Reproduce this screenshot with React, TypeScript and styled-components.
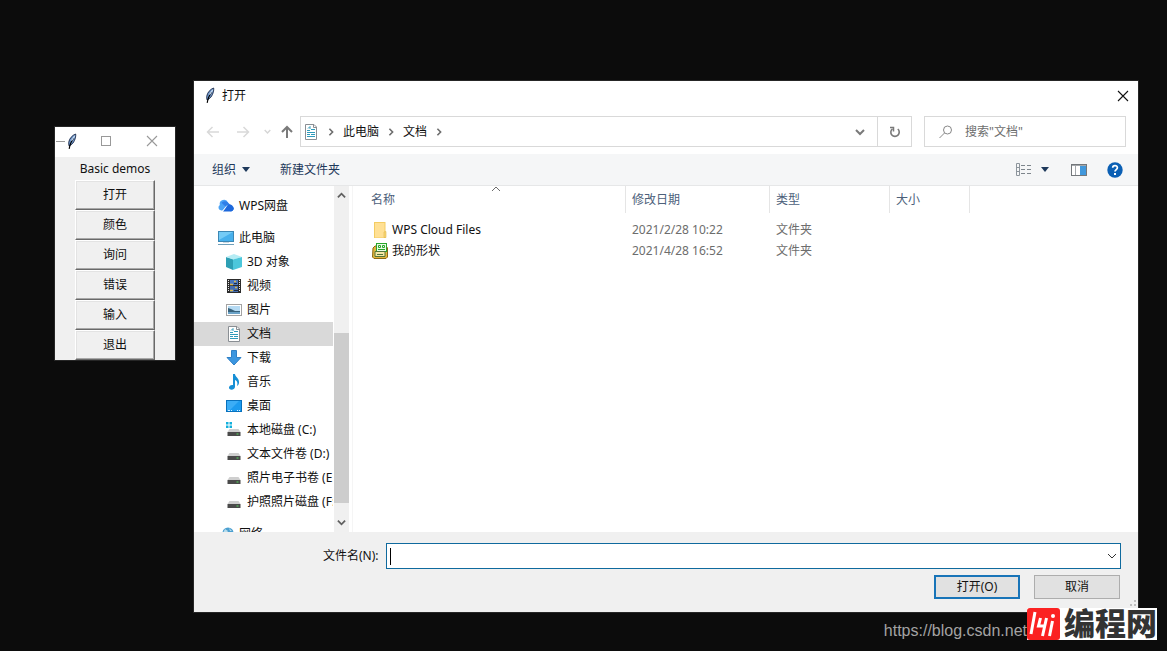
import React from 'react';
import styled, { createGlobalStyle } from 'styled-components';

const GlobalStyle = createGlobalStyle`
  * { box-sizing: border-box; }
  body {
    margin: 0;
    background: #0c0c0c;
    font: 12px/16px "Noto Sans", "Noto Sans CJK SC", sans-serif;
    color: #111;
  }
  button, input { font: inherit; color: inherit; }
  button { padding: 0; margin: 0; border: 0; background: none; }
  svg { display: block; flex: none; }
`;

const Desktop = styled.main`
  position: relative;
  min-height: 100vh;
  overflow: hidden;
`;

/* Demo launcher window */

const DemoWindow = styled.section`
  position: absolute;
  left: 55px;
  top: 127px;
  width: 120px;
  background: #f0f0f0;
  box-shadow: 0 0 0 1px #262626;
`;

const DemoTitleBar = styled.header`
  display: flex;
  align-items: center;
  justify-content: space-between;
  height: 30px;
  padding: 0 17px 2px 1px;
  background: #fff;
`;

const DemoSystem = styled.div`
  display: flex;
  align-items: center;
`;

const DemoControls = styled.div`
  display: flex;
  align-items: center;
  gap: 35px;
`;

const DemoBody = styled.div`
  display: flex;
  flex-direction: column;
  align-items: center;
`;

const DemoTitle = styled.h1`
  margin: 0;
  font-size: 12px;
  font-weight: 400;
  line-height: 23px;
`;

const DemoButton = styled.button`
  width: 80px;
  height: 30px;
  border: 1px solid;
  border-color: #fff #696969 #696969 #fff;
  box-shadow: inset -1px -1px 0 #a8a8a8, inset 1px 1px 0 #e3e3e3;
  background: #f0f0f0;
`;

/* Open-file dialog */

const Dialog = styled.section`
  position: absolute;
  left: 194px;
  right: 29px;
  top: 81px;
  background: #fff;
  box-shadow: 0 0 0 1px #262626;
`;

const TitleBar = styled.header`
  display: flex;
  align-items: center;
  gap: 6px;
  height: 29px;
  padding: 0 9px 0 9px;
`;

const DialogTitle = styled.h2`
  flex: 1;
  margin: 0;
  font-size: 12px;
  font-weight: 400;
`;

const NavRow = styled.nav`
  display: flex;
  align-items: center;
  height: 44px;
  padding: 0 12px 1px;
`;

const NavButtons = styled.div`
  display: grid;
  grid-template-columns: 30px 28px 16px 14px;
  align-items: center;
  margin-right: 6px;
`;

const AddressBar = styled.div`
  display: flex;
  flex: 1;
  height: 31px;
  border: 1px solid #d9d9d9;
`;

const Crumbs = styled.div`
  display: flex;
  flex: 1;
  align-items: center;
  gap: 8px;
  padding-left: 2px;
`;

const AddressButton = styled.button<{ $divided?: boolean }>`
  display: flex;
  align-items: center;
  justify-content: center;
  width: 34px;
  border-left: ${(p) => (p.$divided ? '1px solid #d9d9d9' : '0')};
`;

const SearchBox = styled.label`
  display: flex;
  align-items: center;
  gap: 12px;
  width: 202px;
  height: 31px;
  margin-left: 12px;
  padding-left: 14px;
  border: 1px solid #d9d9d9;
`;

const SearchInput = styled.input`
  width: 140px;
  padding: 0;
  border: 0;
  outline: 0;
  background: none;
  &::placeholder { color: #6d6d6d; opacity: 1; }
`;

const Toolbar = styled.div`
  display: flex;
  align-items: center;
  height: 32px;
  padding: 0 15px 0 18px;
  background: #f5f6f7;
  border-bottom: 1px solid #e6e7e8;
  color: #1e395b;
`;

const ToolButton = styled.button<{ $gap: number }>`
  display: flex;
  align-items: center;
  gap: 6px;
  margin-right: ${(p) => p.$gap}px;
`;

const Spacer = styled.div`
  flex: 1;
`;

const Browser = styled.div`
  display: flex;
  height: 346px;
`;

const Tree = styled.ul`
  width: 139px;
  margin: 0;
  padding: 8px 0 0;
  overflow: hidden;
  list-style: none;
`;

const TreeItem = styled.li<{ $root?: boolean; $selected?: boolean; $spaced?: boolean }>`
  display: flex;
  align-items: center;
  gap: 5px;
  height: 24px;
  margin-top: ${(p) => (p.$spaced ? '8px' : '0')};
  padding-left: ${(p) => (p.$root ? '24px' : '32px')};
  background: ${(p) => (p.$selected ? '#d9d9d9' : 'transparent')};
  white-space: nowrap;
`;

const ScrollTrack = styled.div`
  display: flex;
  flex-direction: column;
  align-items: center;
  width: 15px;
  margin-left: 1px;
  background: #f0f0f0;
`;

const ScrollButton = styled.button`
  display: flex;
  align-items: center;
  justify-content: center;
  width: 100%;
  height: 19px;
`;

const ScrollThumb = styled.div`
  width: 100%;
  height: 170px;
  margin-bottom: 10px;
  background: #cdcdcd;
`;

const FileArea = styled.div`
  position: relative;
  flex: 1;
  margin-left: 3px;
  border-left: 1px solid #f5f5f5;
`;

const SortMark = styled.div`
  position: absolute;
  left: 138px;
  top: -2px;
`;

const FileTable = styled.table`
  width: 617px;
  table-layout: fixed;
  border-collapse: separate;
  border-spacing: 0;
  tbody::before { content: ''; display: block; height: 6px; }
`;

const HeadCell = styled.th<{ $width: number; $first?: boolean }>`
  width: ${(p) => p.$width}px;
  height: 27px;
  padding: 0 0 0 ${(p) => (p.$first ? 18 : 6)}px;
  border-right: 1px solid #e5e5e5;
  color: #4c607a;
  font-weight: 400;
  text-align: left;
`;

const Cell = styled.td`
  height: 21px;
  padding: 0 0 0 6px;
  color: #6d6d6d;
`;

const NameCell = styled(Cell)`
  padding-left: 19px;
  color: #111;
`;

const FileName = styled.div`
  display: flex;
  align-items: center;
  gap: 4px;
`;

const Footer = styled.footer`
  position: relative;
  padding: 11px 18px 13px;
  background: #f0f0f0;
`;

const NameRow = styled.div`
  display: grid;
  grid-template-columns: 63px 1fr;
  align-items: center;
  margin: 0 -1px 0 111px;
`;

const NameField = styled.div`
  display: flex;
  align-items: center;
  height: 26px;
  padding: 0 3px;
  border: 1px solid #0f6a9e;
  background: #fff;
`;

const Caret = styled.span`
  width: 1px;
  height: 17px;
  background: #000;
`;

const NameInput = styled.input`
  flex: 1;
  min-width: 0;
  border: 0;
  outline: 0;
  background: none;
`;

const ActionRow = styled.div`
  display: flex;
  justify-content: flex-end;
  gap: 14px;
  padding: 6px 0 0;
`;

const ActionButton = styled.button<{ $primary?: boolean }>`
  width: 86px;
  height: 24px;
  border: ${(p) => (p.$primary ? '2px solid #1874b8' : '1px solid #adadad')};
  background: #e1e1e1;
`;

const Grip = styled.div`
  position: absolute;
  right: 2px;
  bottom: 2px;
`;

/* Watermark over the desktop */

const Watermark = styled.div`
  position: absolute;
  right: 10px;
  bottom: 10px;
  display: flex;
  align-items: center;
`;

const WatermarkLink = styled.a`
  padding-top: 14px;
  color: #a3a3a3;
  font: 16px/20px "Liberation Sans", sans-serif;
  text-decoration: none;
`;

const Brand = styled.div`
  display: flex;
  align-items: center;
  gap: 4px;
  height: 32px;
  background: #fff;
  color: #333;
  font: 900 31px/32px "Noto Sans CJK SC", sans-serif;
`;

const BrandText = styled.span`
  height: 32px;
  line-height: 28px;
`;

const Feather = () => (
  <svg width="13" height="17" viewBox="0 0 14 18">
    <path d="M11.500 1C8 2 4.500 6 4 10L4.200 13.500L6 13C9.500 11 12 5 11.500 1Z" fill="#6f97cc" stroke="#1b2a48" />
    <path d="M9.500 5C7 8 5.500 11 4.500 17" fill="none" stroke="#000" strokeWidth="1.200" />
    <path d="M10.500 3L7 8" stroke="#c9dcf2" strokeWidth="1.200" />
  </svg>
);

const Chevron = ({ dir, color = '#6d6d6d', size = 8, stroke = 2 }: { dir: 'up' | 'down' | 'right'; color?: string; size?: number; stroke?: number }) => {
  const d = { up: 'M1 7L5 3L9 7', down: 'M1 3L5 7L9 3', right: 'M3 1L7 5L3 9' }[dir];
  return (
    <svg width={size} height={size} viewBox="0 0 10 10">
      <path d={d} fill="none" stroke={color} strokeWidth={stroke} />
    </svg>
  );
};

const Arrow = ({ d, color, stroke = 1.5 }: { d: string; color: string; stroke?: number }) => (
  <svg width="14" height="14" viewBox="0 0 14 14">
    <path d={d} fill="none" stroke={color} strokeWidth={stroke} />
  </svg>
);

const Close = ({ color }: { color: string }) => (
  <svg width="12" height="12" viewBox="0 0 12 12">
    <path d="M1 1L11 11M11 1L1 11" stroke={color} strokeWidth="1.100" />
  </svg>
);

const Triangle = () => (
  <svg width="8" height="5" viewBox="0 0 8 5">
    <path d="M0 0H8L4 5Z" fill="#1e395b" />
  </svg>
);

const DocIcon = () => (
  <svg width="16" height="16" viewBox="0 0 16 16">
    <path d="M2.500 .5H11L13.500 3V15.500H2.500Z" fill="#fff" stroke="#8a8f94" />
    <path d="M10.500 .5V3.500H13.500" fill="none" stroke="#8a8f94" />
    <path d="M4 6.500H7M8 5.500H12M4 8.500H12M4 10.500H7M8 10.500H12M4 12.500H12" stroke="#2f9bbb" />
    <path d="M5 4.500L7 2.500V5" fill="none" stroke="#2f9bbb" />
  </svg>
);

const CloudIcon = () => (
  <svg width="16" height="16" viewBox="0 0 16 16">
    <path d="M3.200 12.500A3 3 0 0 1 1.800 7A4.300 4.300 0 0 1 10 4.500L10 6.500L5 12.500Z" fill="#4ba3f5" />
    <path d="M3.500 4.800A4.300 4.300 0 0 1 10 4.500L15.500 10A3 3 0 0 1 13 13.500L8 9Z" fill="#2f7fe8" />
    <path d="M5 13.500L9.500 7.500A3.400 3.400 0 0 1 15 8.500A3 3 0 0 1 13 13.500Z" fill="#1d68dc" />
    <path d="M4.500 13L9 7.500" stroke="#fff" strokeWidth=".8" />
  </svg>
);

const PcIcon = () => (
  <svg width="16" height="16" viewBox="0 0 16 16">
    <rect x=".5" y="1.500" width="15" height="10" fill="#47b0ec" stroke="#3c87b4" />
    <path d="M1 2H15L1 10Z" fill="#74cbf6" />
    <path d="M0 14.500H16" stroke="#6f9fba" />
    <path d="M5 12.500H11" stroke="#c9d8e2" />
  </svg>
);

const CubeIcon = () => (
  <svg width="16" height="16" viewBox="0 0 16 16">
    <path d="M0 3L7 5V16L0 13Z" fill="#2d9fb4" />
    <path d="M0 3L8 0L16 3L7 5.500Z" fill="#b5ecf4" />
    <path d="M7 5.500L16 3V13L7 16Z" fill="#4cc7db" />
  </svg>
);

const VideoIcon = () => (
  <svg width="16" height="16" viewBox="0 0 16 16">
    <rect x="1" y="1" width="14" height="14" fill="#2c2c2c" />
    <path d="M2.500 2V14M13.500 2V14" stroke="#e8e8e8" strokeDasharray="1 1" />
    <rect x="4" y="2" width="8" height="5" fill="#4a78c0" />
    <rect x="4" y="8" width="8" height="6" fill="#456fb2" />
    <path d="M4 6.500H7M8 3.500H10M4 12.500H7M9 9.500H11" stroke="#dab94f" strokeWidth="1.500" />
    <path d="M8 5.500H11M8 12.500H12" stroke="#1d2a44" />
  </svg>
);

const PictureIcon = () => (
  <svg width="16" height="16" viewBox="0 0 16 16">
    <rect x=".5" y="2.500" width="15" height="11" fill="#fff" stroke="#a3a3a3" />
    <rect x="2" y="4" width="12" height="8" fill="#b5daf3" />
    <path d="M2 10V6L5 7L9 9L14 9V10Z" fill="#38627c" />
    <rect x="2" y="10" width="12" height="2" fill="#6ba3c8" />
  </svg>
);

const DownloadIcon = () => (
  <svg width="16" height="16" viewBox="0 0 16 16">
    <path d="M5.500 .5H10.500V7.500H15L8 15L1 7.500H5.500Z" fill="#3b96e0" stroke="#2f80c6" />
  </svg>
);

const MusicIcon = () => (
  <svg width="16" height="16" viewBox="0 0 16 16">
    <path d="M7 0H9C9 3 13.500 4 13 9C12.500 11 12 11.500 11 12C12 8.500 11 7 9 6V13C8.500 15.500 5.500 16.500 3.500 15C2 13 4 10.500 7 11Z" fill="#168fd6" />
  </svg>
);

const DesktopIcon = () => (
  <svg width="16" height="16" viewBox="0 0 16 16">
    <rect x=".5" y="2.500" width="15" height="11" fill="#1c9bef" stroke="#0871bd" />
    <path d="M1 3H13L3 13H1Z" fill="#3badf6" />
    <path d="M2 12.500H4M5 12.500H6M11 12.500H12M13 12.500H14" stroke="#d7f0ff" />
  </svg>
);

const DriveIcon = ({ system }: { system?: boolean }) => (
  <svg width="16" height="16" viewBox="0 0 16 16">
    {system && <path d="M0 0H2.500V2.500H0ZM3.500 0H6V2.500H3.500ZM0 3.500H2.500V6H0ZM3.500 3.500H6V6H3.500Z" fill="#13b0dc" />}
    <path d="M3.500 7H12.500L14.500 10H1.500Z" fill="#cfcfcf" />
    <rect x="1.500" y="10" width="13" height="4" fill="#4a4a4a" />
    <path d="M10.500 12H12.500" stroke="#55d85c" />
  </svg>
);

const NetworkIcon = () => (
  <svg width="16" height="16" viewBox="0 0 16 16">
    <circle cx="10" cy="7" r="5.500" fill="#4a9fd0" />
    <path d="M7 3L10 5L8 8L5 7ZM11 2L14 5H12Z" fill="#b7dcec" />
    <path d="M3 10H11V15H3Z" fill="#69bce8" stroke="#367" />
  </svg>
);

const FolderIcon = () => (
  <svg width="16" height="16" viewBox="0 0 16 16">
    <path d="M2 0H13.500V16H2Z" fill="#f3cc62" />
    <path d="M3 1H12.500V15.500H3Z" fill="#ffe094" />
    <path d="M12 15.500V10L14 9.500V15.500Z" fill="#f8d675" stroke="#e3b84b" strokeWidth=".6" />
  </svg>
);

const ShapesIcon = () => (
  <svg width="16" height="16" viewBox="0 0 16 16">
    <path d="M1 5L3 3H14L15.500 5V14L14 15.500H2L.5 14Z" fill="#e2b53d" stroke="#8b6914" />
    <rect x="4.500" y=".5" width="10" height="8" fill="#e9fbe5" stroke="#28a62c" />
    <path d="M6.500 2.500H8.500V4.500H6.500ZM10.500 2.500H12.500V4.500H10.500Z" fill="none" stroke="#28a62c" />
    <path d="M6 6.500H13" stroke="#28a62c" />
    <path d="M3 8.500H13V13.500H3Z" fill="#f4e7a4" stroke="#53743a" />
    <path d="M5 11.500H11" stroke="#53743a" />
  </svg>
);

const tree = [
  { label: 'WPS网盘', icon: <CloudIcon />, root: true },
  { label: '此电脑', icon: <PcIcon />, root: true, spaced: true },
  { label: '3D 对象', icon: <CubeIcon /> },
  { label: '视频', icon: <VideoIcon /> },
  { label: '图片', icon: <PictureIcon /> },
  { label: '文档', icon: <DocIcon />, selected: true },
  { label: '下载', icon: <DownloadIcon /> },
  { label: '音乐', icon: <MusicIcon /> },
  { label: '桌面', icon: <DesktopIcon /> },
  { label: '本地磁盘 (C:)', icon: <DriveIcon system /> },
  { label: '文本文件卷 (D:)', icon: <DriveIcon /> },
  { label: '照片电子书卷 (E:)', icon: <DriveIcon /> },
  { label: '护照照片磁盘 (F:)', icon: <DriveIcon /> },
  { label: '网络', icon: <NetworkIcon />, root: true, spaced: true },
];

const files = [
  { name: 'WPS Cloud Files', icon: <FolderIcon />, date: '2021/2/28 10:22', type: '文件夹' },
  { name: '我的形状', icon: <ShapesIcon />, date: '2021/4/28 16:52', type: '文件夹' },
];

const demos = ['打开', '颜色', '询问', '错误', '输入', '退出'];

export default function App() {
  return (
    <>
      <GlobalStyle />
      <Desktop>
        <DemoWindow>
          <DemoTitleBar>
            <DemoSystem>
              <svg width="9" height="3" viewBox="0 0 9 3"><path d="M0 1.500H9" stroke="#999" /></svg>
              <Feather />
            </DemoSystem>
            <DemoControls>
              <button aria-label="最大化">
                <svg width="10" height="10" viewBox="0 0 10 10"><rect x=".5" y=".5" width="9" height="9" fill="none" stroke="#999" /></svg>
              </button>
              <button aria-label="关闭"><Close color="#999" /></button>
            </DemoControls>
          </DemoTitleBar>
          <DemoBody>
            <DemoTitle>Basic demos</DemoTitle>
            {demos.map((d) => <DemoButton key={d}>{d}</DemoButton>)}
          </DemoBody>
        </DemoWindow>

        <Dialog>
          <TitleBar>
            <Feather />
            <DialogTitle>打开</DialogTitle>
            <button aria-label="关闭"><Close color="#111" /></button>
          </TitleBar>
          <NavRow>
            <NavButtons>
              <button aria-label="后退"><Arrow d="M13 7H2M6.500 2L1.500 7L6.500 12" color="#d9d9d9" /></button>
              <button aria-label="前进"><Arrow d="M1 7H12M7.500 2L12.500 7L7.500 12" color="#d9d9d9" /></button>
              <button aria-label="最近位置"><Chevron dir="down" color="#d5d5d5" size={7} /></button>
              <button aria-label="上移"><Arrow d="M7 13V2M2 7L7 2L12 7" color="#7a7a7a" stroke={2} /></button>
            </NavButtons>
            <AddressBar>
              <Crumbs>
                <DocIcon />
                <Chevron dir="right" />
                <span>此电脑</span>
                <Chevron dir="right" />
                <span>文档</span>
                <Chevron dir="right" />
              </Crumbs>
              <AddressButton aria-label="展开"><Chevron dir="down" size={10} color="#7a7a7a" /></AddressButton>
              <AddressButton $divided aria-label="刷新">
                <svg width="12" height="12" viewBox="0 0 12 12">
                  <path d="M8.800 3A4.200 4.200 0 1 1 3.500 2.800" fill="none" stroke="#7a7a7a" strokeWidth="1.600" />
                  <path d="M1 1.500H4.500V5.500" fill="none" stroke="#7a7a7a" strokeWidth="1.500" />
                </svg>
              </AddressButton>
            </AddressBar>
            <SearchBox>
              <svg width="14" height="14" viewBox="0 0 14 14">
                <circle cx="8.500" cy="5" r="4" fill="none" stroke="#888" />
                <path d="M5.500 8L.5 13" stroke="#888" />
              </svg>
              <SearchInput aria-label="搜索" placeholder={'搜索"文档"'} />
            </SearchBox>
          </NavRow>
          <Toolbar>
            <ToolButton $gap={30}>组织<Triangle /></ToolButton>
            <ToolButton $gap={0}>新建文件夹</ToolButton>
            <Spacer />
            <ToolButton $gap={22} aria-label="更改视图">
              <svg width="20" height="14" viewBox="0 0 20 14">
                <path d="M1.500 .5H4.500V12.500H1.500ZM1.500 4.500H4.500M1.500 8.500H4.500" fill="none" stroke="#8d959c" />
                <path d="M6 2.500H10M12 2.500H16M6 6.500H10M12 6.500H16M6 10.500H10M12 10.500H16" stroke="#7d858c" />
              </svg>
              <Triangle />
            </ToolButton>
            <ToolButton $gap={20} aria-label="预览窗格">
              <svg width="16" height="12" viewBox="0 0 16 12">
                <rect x=".5" y=".5" width="15" height="11" fill="#fff" stroke="#73777b" />
                <path d="M1 1.500H15M4.500 2V11" stroke="#a3a7ab" />
                <rect x="9" y="2" width="6" height="9" fill="#4198dc" />
              </svg>
            </ToolButton>
            <ToolButton $gap={0} aria-label="帮助">
              <svg width="16" height="16" viewBox="0 0 16 16">
                <circle cx="8" cy="8" r="7.700" fill="#0a5fb4" />
                <path d="M5.700 5.800C5.700 2.900 10.400 2.900 10.400 5.700C10.400 7.500 8 7.600 8 9.600" fill="none" stroke="#fff" strokeWidth="1.700" />
                <rect x="7" y="11" width="2" height="2" fill="#fff" />
              </svg>
            </ToolButton>
          </Toolbar>
          <Browser>
            <Tree>
              {tree.map((t) => (
                <TreeItem key={t.label} $root={t.root} $spaced={t.spaced} $selected={t.selected}>
                  {t.icon}
                  <span>{t.label}</span>
                </TreeItem>
              ))}
            </Tree>
            <ScrollTrack>
              <ScrollButton aria-label="向上"><Chevron dir="up" size={9} color="#606060" /></ScrollButton>
              <Spacer />
              <ScrollThumb />
              <ScrollButton aria-label="向下"><Chevron dir="down" size={9} color="#606060" /></ScrollButton>
            </ScrollTrack>
            <FileArea>
              <SortMark><Chevron dir="up" size={10} stroke={1} /></SortMark>
              <FileTable>
                <thead>
                  <tr>
                    <HeadCell $width={273} $first>名称</HeadCell>
                    <HeadCell $width={144}>修改日期</HeadCell>
                    <HeadCell $width={120}>类型</HeadCell>
                    <HeadCell $width={80}>大小</HeadCell>
                  </tr>
                </thead>
                <tbody>
                  {files.map((f) => (
                    <tr key={f.name}>
                      <NameCell><FileName>{f.icon}{f.name}</FileName></NameCell>
                      <Cell>{f.date}</Cell>
                      <Cell>{f.type}</Cell>
                      <Cell />
                    </tr>
                  ))}
                </tbody>
              </FileTable>
            </FileArea>
          </Browser>
          <Footer>
            <NameRow>
              <label htmlFor="file-name">文件名(N):</label>
              <NameField>
                <Caret />
                <NameInput id="file-name" />
                <Chevron dir="down" size={10} stroke={1} color="#333" />
              </NameField>
            </NameRow>
            <ActionRow>
              <ActionButton $primary>打开(O)</ActionButton>
              <ActionButton>取消</ActionButton>
            </ActionRow>
            <Grip>
              <svg width="10" height="10" viewBox="0 0 10 10">
                <path d="M8 0H10V2H8ZM4 4H6V6H4ZM8 4H10V6H8ZM0 8H2V10H0ZM4 8H6V10H4ZM8 8H10V10H8Z" fill="#bfbfbf" />
              </svg>
            </Grip>
          </Footer>
        </Dialog>

        <Watermark>
          <WatermarkLink href="https://blog.csdn.net">https://blog.csdn.net</WatermarkLink>
          <Brand>
            <svg width="33" height="32" viewBox="0 0 33 32">
              <rect width="33" height="32" rx="3" fill="#fb2222" />
              <path d="M8 4L4 26M13.500 10L11.500 18H19M19.500 10L15.500 28M25.500 13L22.500 28" fill="none" stroke="#fff" strokeWidth="3" />
              <circle cx="26" cy="8" r="2" fill="#fff" />
            </svg>
            <BrandText>编程网</BrandText>
          </Brand>
        </Watermark>
      </Desktop>
    </>
  );
}
